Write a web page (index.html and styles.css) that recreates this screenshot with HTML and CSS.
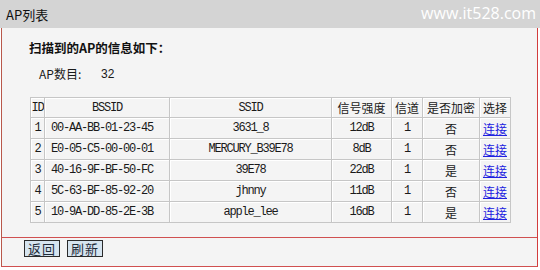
FILE: index.html
```html
<!DOCTYPE html>
<html lang="zh-CN">
<head>
<meta charset="utf-8">
<title>AP列表</title>
<link rel="stylesheet" href="styles.css">
</head>
<body>
<div class="titlebar">
  <span class="title">AP列表</span>
  <span class="watermark">www.it528.com</span>
</div>
<div class="panel">
  <div class="main">
    <div class="heading">扫描到的AP的信息如下：</div>
    <div class="count"><span class="count-label">AP数目:</span><span class="count-value">32</span></div>
    <table class="aps">
      <colgroup>
        <col class="c-id"><col class="c-bssid"><col class="c-ssid"><col class="c-sig"><col class="c-ch"><col class="c-enc"><col class="c-sel">
      </colgroup>
      <thead>
        <tr><th class="mono">ID</th><th class="mono">BSSID</th><th class="mono">SSID</th><th>信号强度</th><th>信道</th><th>是否加密</th><th>选择</th></tr>
      </thead>
      <tbody>
        <tr><td class="mono">1</td><td class="mono left">00-AA-BB-01-23-45</td><td class="mono">3631_8</td><td class="mono">12dB</td><td class="mono">1</td><td>否</td><td><a href="#">连接</a></td></tr>
        <tr><td class="mono">2</td><td class="mono left">E0-05-C5-00-00-01</td><td class="mono">MERCURY_B39E78</td><td class="mono">8dB</td><td class="mono">1</td><td>否</td><td><a href="#">连接</a></td></tr>
        <tr><td class="mono">3</td><td class="mono left">40-16-9F-BF-50-FC</td><td class="mono">39E78</td><td class="mono">22dB</td><td class="mono">1</td><td>是</td><td><a href="#">连接</a></td></tr>
        <tr><td class="mono">4</td><td class="mono left">5C-63-BF-85-92-20</td><td class="mono">jhnny</td><td class="mono">11dB</td><td class="mono">1</td><td>否</td><td><a href="#">连接</a></td></tr>
        <tr><td class="mono">5</td><td class="mono left">10-9A-DD-85-2E-3B</td><td class="mono">apple_lee</td><td class="mono">16dB</td><td class="mono">1</td><td>是</td><td><a href="#">连接</a></td></tr>
      </tbody>
    </table>
  </div>
  <div class="actions">
    <button class="btn">返回</button>
    <button class="btn">刷新</button>
  </div>
</div>
</body>
</html>
```

FILE: styles.css
```css
html, body {
  margin: 0;
  padding: 0;
  background: #ffffff;
}
body {
  font-family: "Noto Sans CJK SC", "Liberation Sans", sans-serif;
  font-size: 12px;
  color: #1a1a1a;
  width: 540px;
}
.titlebar {
  height: 28px;
  background: #d4d4d4;
  display: flex;
  align-items: center;
  justify-content: space-between;
  padding: 0 4px 0 6px;
}
.title {
  font-size: 13px;
  color: #111;
  line-height: 1;
}
.watermark {
  font-family: "Open Sans", "Liberation Sans", sans-serif;
  font-size: 16px;
  color: #ffffff;
  line-height: 1;
  margin-top: -2px;
}
.panel {
  margin-left: 1px;
  width: 535px;
  background: #f4f4f4;
  border-left: 1px solid #b8584a;
  border-right: 1px solid #d23c3c;
  border-bottom: 1px solid #d05050;
}
.main {
  padding: 12px 0 14px 27px;
  border-bottom: 1px solid #d05050;
}
.heading {
  font-size: 12.5px;
  font-weight: bold;
  line-height: 16px;
  color: #111;
}
.count {
  margin: 10px 0 0 10px;
  line-height: 16px;
  display: flex;
}
.count-label {
  width: 62px;
}
.count-value {
  font-family: "Liberation Sans", sans-serif;
}
.aps {
  margin-top: 15px;
  margin-left: 1px;
  border-collapse: collapse;
  table-layout: fixed;
  width: 480px;
}
.c-id { width: 14px; }
.c-bssid { width: 125px; }
.c-ssid { width: 162px; }
.c-sig { width: 60px; }
.c-ch { width: 31px; }
.c-enc { width: 57px; }
.c-sel { width: 31px; }
.aps th, .aps td {
  border: 1px solid #c6c6c6;
  box-shadow: inset 1px 1px 0 #ffffff;
  padding: 0;
  text-align: center;
  font-weight: normal;
  white-space: nowrap;
  overflow: hidden;
  font-size: 12px;
}
.aps th {
  height: 19px;
}
.aps td {
  height: 20px;
}
.mono {
  font-family: "Liberation Mono", "Noto Sans CJK SC", monospace;
  letter-spacing: -1.2px;
}
.aps td.left {
  text-align: left;
  padding-left: 6px;
}
.aps a {
  color: #2020e0;
  text-decoration: underline;
}
.actions {
  display: flex;
  gap: 7px;
  padding: 2px 0 9px 22px;
}
.btn {
  font-family: "Noto Sans CJK SC", sans-serif;
  font-size: 13px;
  line-height: 14px;
  height: 17px;
  padding: 0 3px;
  margin: 0;
  background: #d6e4ef;
  color: #1e2a38;
  border: 1px solid #2a2a2a;
  border-radius: 0;
  letter-spacing: 1px;
}
```
